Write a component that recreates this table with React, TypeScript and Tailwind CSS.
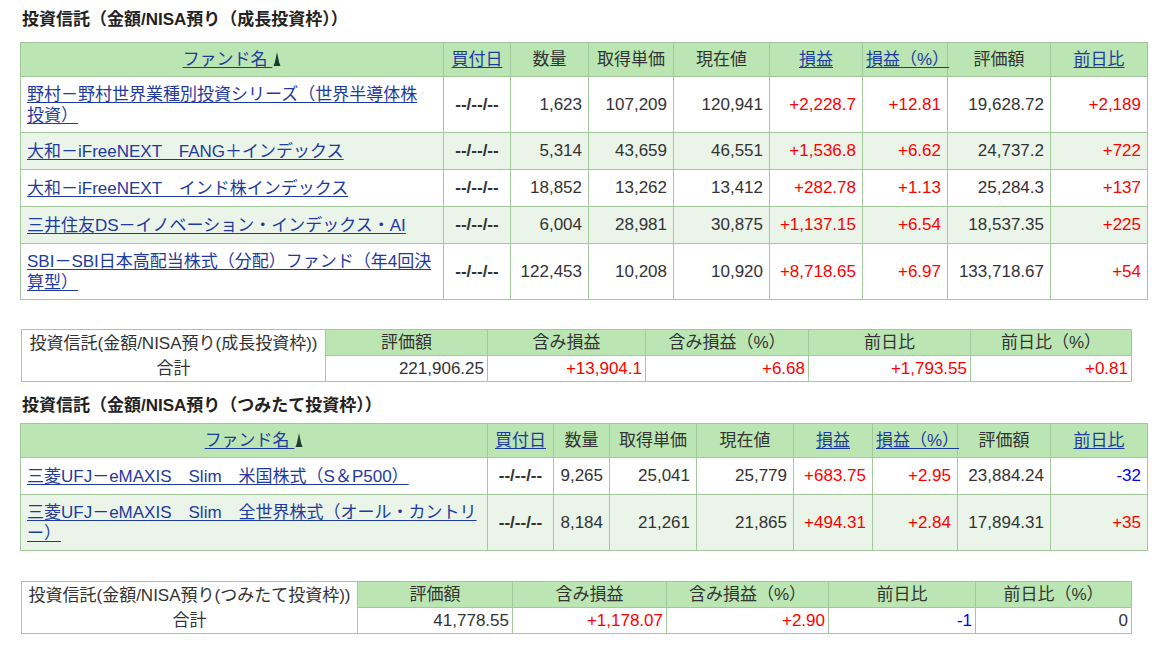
import React from "react";

type Tone = "plus" | "minus" | "zero";

interface Fund {
  name: React.ReactNode;
  qty: string;
  cost: string;
  price: string;
  pl: string;
  plPct: string;
  value: string;
  dayDiff: string;
  dayTone: Tone;
  tall?: boolean;
}

interface Summary {
  label: string;
  value: string;
  pl: string;
  plPct: string;
  day: string;
  dayTone: Tone;
  dayPct: string;
  dayPctTone: Tone;
}

const growthFunds: Fund[] = [
  {
    name: (
      <>
        野村－野村世界業種別投資シリーズ（世界半導体株
        <br />
        投資）
      </>
    ),
    qty: "1,623",
    cost: "107,209",
    price: "120,941",
    pl: "+2,228.7",
    plPct: "+12.81",
    value: "19,628.72",
    dayDiff: "+2,189",
    dayTone: "plus",
    tall: true,
  },
  {
    name: "大和－iFreeNEXT　FANG＋インデックス",
    qty: "5,314",
    cost: "43,659",
    price: "46,551",
    pl: "+1,536.8",
    plPct: "+6.62",
    value: "24,737.2",
    dayDiff: "+722",
    dayTone: "plus",
  },
  {
    name: "大和－iFreeNEXT　インド株インデックス",
    qty: "18,852",
    cost: "13,262",
    price: "13,412",
    pl: "+282.78",
    plPct: "+1.13",
    value: "25,284.3",
    dayDiff: "+137",
    dayTone: "plus",
  },
  {
    name: "三井住友DS－イノベーション・インデックス・AI",
    qty: "6,004",
    cost: "28,981",
    price: "30,875",
    pl: "+1,137.15",
    plPct: "+6.54",
    value: "18,537.35",
    dayDiff: "+225",
    dayTone: "plus",
  },
  {
    name: (
      <>
        SBI－SBI日本高配当株式（分配）ファンド（年4回決
        <br />
        算型）
      </>
    ),
    qty: "122,453",
    cost: "10,208",
    price: "10,920",
    pl: "+8,718.65",
    plPct: "+6.97",
    value: "133,718.67",
    dayDiff: "+54",
    dayTone: "plus",
    tall: true,
  },
];

const tsumitateFunds: Fund[] = [
  {
    name: "三菱UFJ－eMAXIS　Slim　米国株式（S＆P500）",
    qty: "9,265",
    cost: "25,041",
    price: "25,779",
    pl: "+683.75",
    plPct: "+2.95",
    value: "23,884.24",
    dayDiff: "-32",
    dayTone: "minus",
  },
  {
    name: (
      <>
        三菱UFJ－eMAXIS　Slim　全世界株式（オール・カントリ
        <br />
        ー）
      </>
    ),
    qty: "8,184",
    cost: "21,261",
    price: "21,865",
    pl: "+494.31",
    plPct: "+2.84",
    value: "17,894.31",
    dayDiff: "+35",
    dayTone: "plus",
    tall: true,
  },
];

const toneClass = (t: Tone) =>
  t === "plus" ? "text-[#ff0000]" : t === "minus" ? "text-[#0000ff]" : "text-[#333333]";

function SortMark() {
  return (
    <svg width="8" height="14" viewBox="0 0 8 14" className="inline-block align-[-1px] ml-[1px]">
      <path d="M4 0 L5 5 L6.2 10.5 L7.5 14 L0.5 14 L1.8 10.5 L3 5 Z" fill="#1c3a32" />
    </svg>
  );
}

const th = "border border-[#a2c89c] bg-[#bbe6b3] font-normal text-[#333333] text-center px-[3px]";
const td = "border border-[#a2c89c] px-[6px]";
const link = "text-[#1f3a9e] underline underline-offset-2";

function FundTable({ funds, widths }: { funds: Fund[]; widths: number[] }) {
  return (
    <table className="table-fixed border-collapse w-[1127px] ml-[20px] border border-[#a2c89c]">
      <colgroup>
        {widths.map((w, i) => (
          <col key={i} style={{ width: w }} />
        ))}
      </colgroup>
      <thead>
        <tr className="h-[34px]">
          <th className={th}>
            <span className={link}>ファンド名 </span>
            <SortMark />
          </th>
          <th className={th}>
            <span className={link}>買付日</span>
          </th>
          <th className={th}>数量</th>
          <th className={th}>取得単価</th>
          <th className={th}>現在値</th>
          <th className={th}>
            <span className={link}>損益</span>
          </th>
          <th className={th}>
            <span className={link}>損益（%）</span>
          </th>
          <th className={th}>評価額</th>
          <th className={th}>
            <span className={link}>前日比</span>
          </th>
        </tr>
      </thead>
      <tbody>
        {funds.map((f, i) => (
          <tr
            key={i}
            className={`${f.tall ? "h-[56px]" : "h-[37px]"} ${i % 2 === 1 ? "bg-[#eaf4e9]" : "bg-white"}`}
          >
            <td className={`${td} text-left leading-[21px]`}>
              <span className={link}>{f.name}</span>
            </td>
            <td className={`${td} text-center font-bold text-[#333333]`}>--/--/--</td>
            <td className={`${td} text-right text-[#333333]`}>{f.qty}</td>
            <td className={`${td} text-right text-[#333333]`}>{f.cost}</td>
            <td className={`${td} text-right text-[#333333]`}>{f.price}</td>
            <td className={`${td} text-right text-[#ff0000]`}>{f.pl}</td>
            <td className={`${td} text-right text-[#ff0000]`}>{f.plPct}</td>
            <td className={`${td} text-right text-[#333333]`}>{f.value}</td>
            <td className={`${td} text-right ${toneClass(f.dayTone)}`}>{f.dayDiff}</td>
          </tr>
        ))}
      </tbody>
    </table>
  );
}

function SummaryTable({ s, widths }: { s: Summary; widths: number[] }) {
  const sth = "border border-[#a2c89c] bg-[#bbe6b3] font-normal text-[#333333] text-center";
  const std = "border border-[#a2c89c] text-right pr-[3px]";
  return (
    <table className="table-fixed border-collapse w-[1110px] ml-[21px] border border-[#a2c89c]">
      <colgroup>
        {widths.map((w, i) => (
          <col key={i} style={{ width: w }} />
        ))}
      </colgroup>
      <tbody>
        <tr className="h-[26px]">
          <td rowSpan={2} className="border border-[#a2c89c] text-center text-[#333333] leading-[25px] whitespace-nowrap">
            {s.label}
            <br />
            合計
          </td>
          <th className={sth}>評価額</th>
          <th className={sth}>含み損益</th>
          <th className={sth}>含み損益（%）</th>
          <th className={sth}>前日比</th>
          <th className={sth}>前日比（%）</th>
        </tr>
        <tr className="h-[26px]">
          <td className={`${std} text-[#333333]`}>{s.value}</td>
          <td className={`${std} text-[#ff0000]`}>{s.pl}</td>
          <td className={`${std} text-[#ff0000]`}>{s.plPct}</td>
          <td className={`${std} ${toneClass(s.dayTone)}`}>{s.day}</td>
          <td className={`${std} ${toneClass(s.dayPctTone)}`}>{s.dayPct}</td>
        </tr>
      </tbody>
    </table>
  );
}

export default function App() {
  return (
    <div className="min-h-[648px] w-[1160px] bg-white pt-[10px] text-[17px] leading-[20px] font-['Liberation_Sans','Noto_Sans_CJK_JP',sans-serif] overflow-hidden">
      <h2 className="ml-[22px] h-[20px] font-bold text-[#222222] text-[17px] leading-[20px]">
        投資信託（金額/NISA預り（成長投資枠））
      </h2>
      <div className="mt-[12px]">
        <FundTable funds={growthFunds} widths={[423, 67, 78, 85, 96, 93, 85, 103, 97]} />
      </div>
      <div className="mt-[29px]">
        <SummaryTable
          widths={[304, 162, 158, 163, 162, 161]}
          s={{
            label: "投資信託(金額/NISA預り(成長投資枠))",
            value: "221,906.25",
            pl: "+13,904.1",
            plPct: "+6.68",
            day: "+1,793.55",
            dayTone: "plus",
            dayPct: "+0.81",
            dayPctTone: "plus",
          }}
        />
      </div>
      <h2 className="mt-[14px] ml-[22px] h-[20px] font-bold text-[#222222] text-[17px] leading-[20px]">
        投資信託（金額/NISA預り（つみたて投資枠））
      </h2>
      <div className="mt-[7px]">
        <FundTable funds={tsumitateFunds} widths={[467, 66, 56, 87, 97, 79, 85, 93, 97]} />
      </div>
      <div className="mt-[30px]">
        <SummaryTable
          widths={[336, 155, 154, 162, 147, 156]}
          s={{
            label: "投資信託(金額/NISA預り(つみたて投資枠))",
            value: "41,778.55",
            pl: "+1,178.07",
            plPct: "+2.90",
            day: "-1",
            dayTone: "minus",
            dayPct: "0",
            dayPctTone: "zero",
          }}
        />
      </div>
    </div>
  );
}
